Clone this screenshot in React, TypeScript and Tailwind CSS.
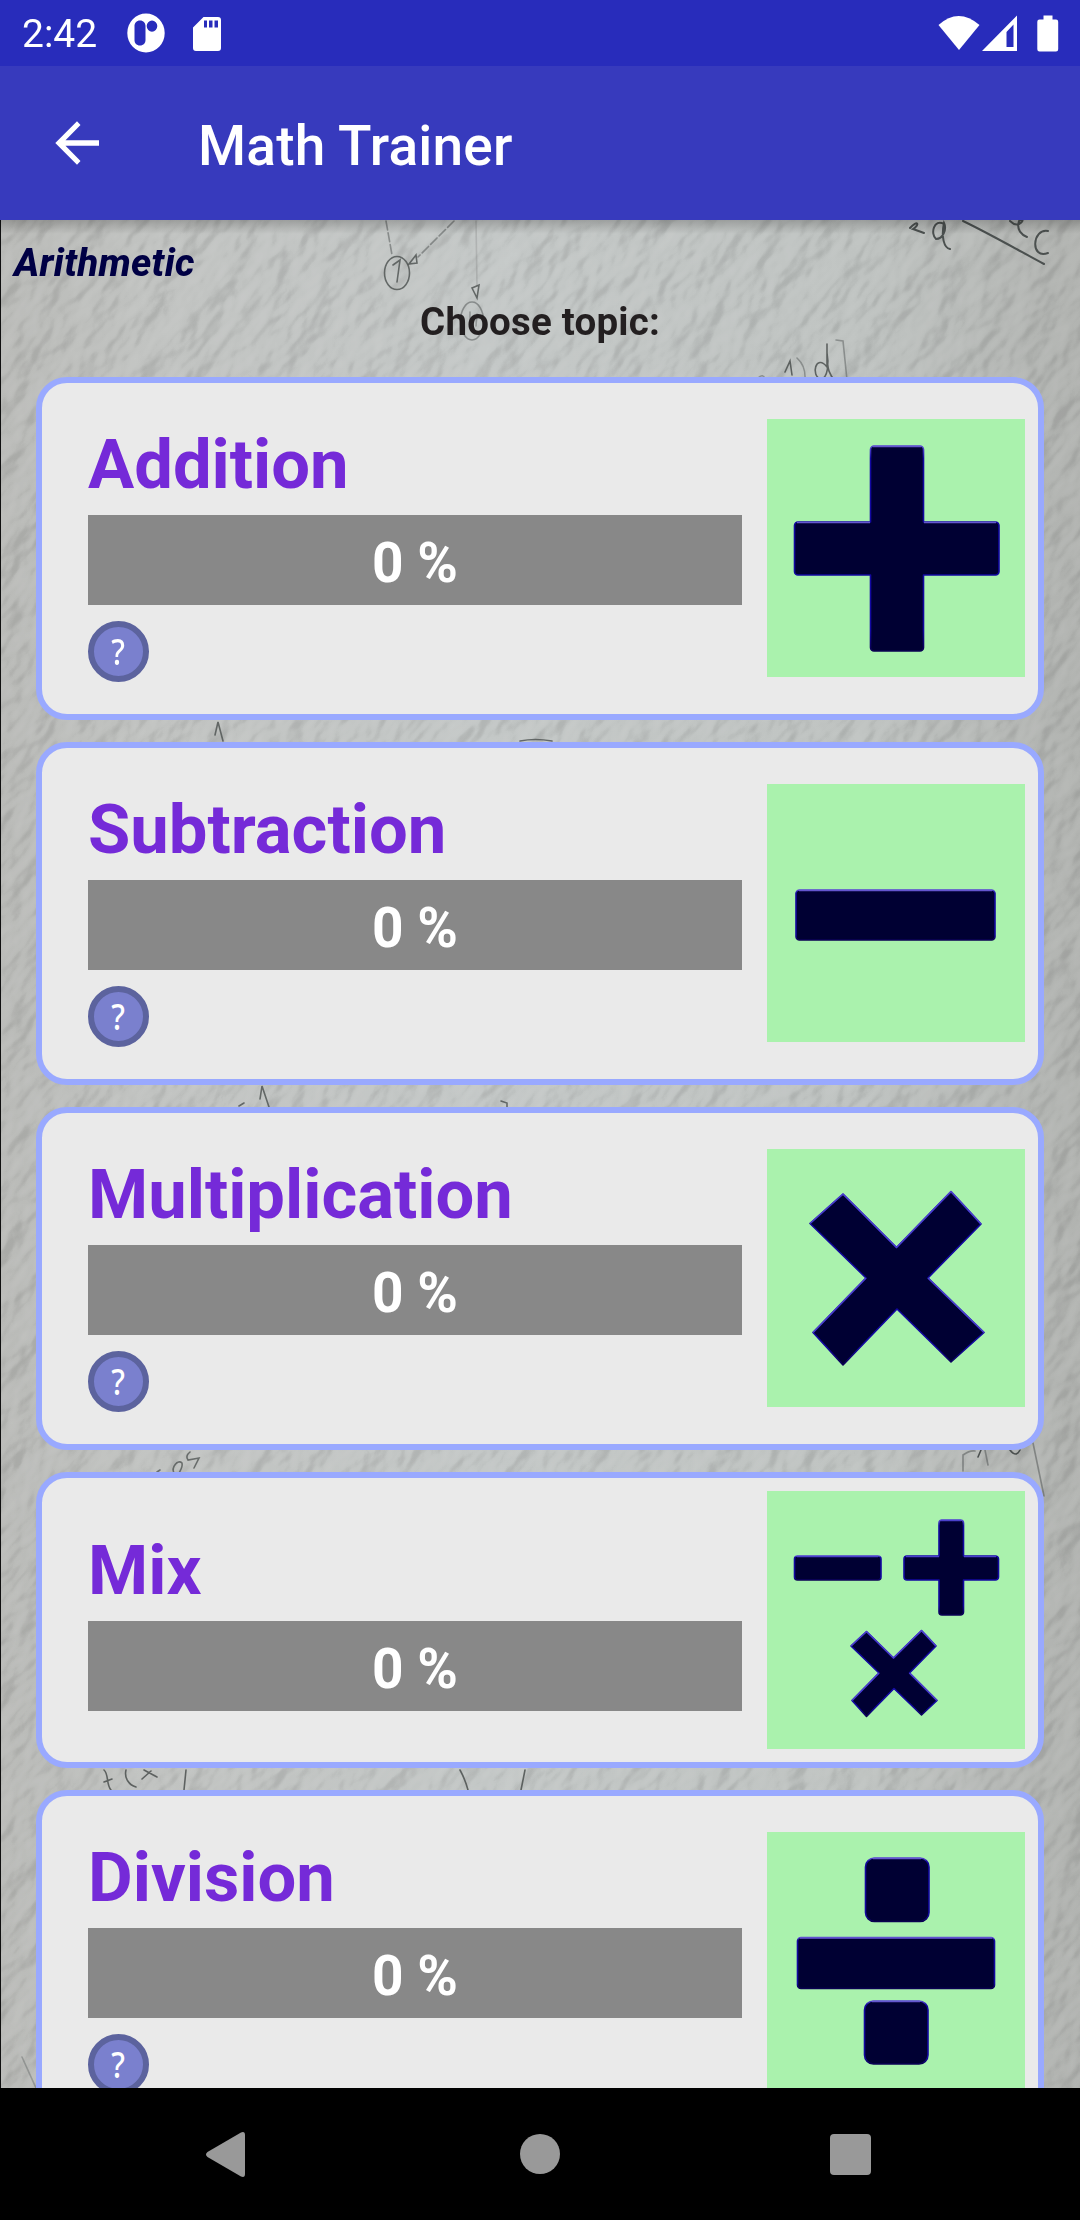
import React from "react";

const INK = "#000033";

function Edge({ id }: { id: string }) {
  return (
    <linearGradient id={id} x1="0" y1="0" x2="0" y2="1">
      <stop offset="0" stopColor="#5a4fd0" />
      <stop offset="0.06" stopColor="#1208a0" />
      <stop offset="0.9" stopColor="#1208a0" />
      <stop offset="1" stopColor="#0a0050" />
    </linearGradient>
  );
}

function SymbolTile({ name, children }: { name: string; children: React.ReactNode }) {
  return (
    <svg viewBox="0 0 258 258" className="h-[258px] w-[258px] shrink-0 bg-[#aaf2ad]">
      <defs>
        <Edge id={"edge-" + name} />
      </defs>
      <g fill={INK} stroke={"url(#edge-" + name + ")"} strokeWidth="1.6" strokeLinejoin="round">
        {children}
      </g>
    </svg>
  );
}

function Plus() {
  return (
    <SymbolTile name="plus">
      <path d="M107 27h46a3.500 3.500 0 0 1 3.500 3.500V103h72a3.500 3.500 0 0 1 3.500 3.500v46a3.500 3.500 0 0 1-3.500 3.500h-72v72.500a3.500 3.500 0 0 1-3.500 3.500h-46a3.500 3.500 0 0 1-3.500-3.500V156H31a3.500 3.500 0 0 1-3.500-3.500v-46a3.500 3.500 0 0 1 3.500-3.500h72.500V30.500A3.500 3.500 0 0 1 107 27z" />
      <path d="M106 27.500h48M30 103.500h73M157 103.500h72" stroke="#6456cf" fill="none" />
    </SymbolTile>
  );
}

function Minus() {
  return (
    <SymbolTile name="minus">
      <rect x="29" y="106" width="199" height="50" rx="3.500" />
      <path d="M32 106.500h193" stroke="#6456cf" />
    </SymbolTile>
  );
}

function Times() {
  return (
    <SymbolTile name="times">
      <path d="M76 45L129.500 98.500 184 42.500 214 75 161 129 217 183.500 184 213 130 160 76 216 46 183.500 99 129 43 74.500z" />
      <path d="M43 74.500L76 45 129.500 98.500 184 42.500 214 75M46 183.500L99 129M161 129L217 183.500" stroke="#4a40cc" fill="none" />
    </SymbolTile>
  );
}

function Mix() {
  return (
    <SymbolTile name="mix">
      <rect x="27.500" y="65" width="86.500" height="24" rx="3" />
      <path d="M175 29h18.500a3 3 0 0 1 3 3v33H228.500a3 3 0 0 1 3 3v18a3 3 0 0 1-3 3h-32v32a3 3 0 0 1-3 3H175a3 3 0 0 1-3-3V89h-32a3 3 0 0 1-3-3V68a3 3 0 0 1 3-3h32V32a3 3 0 0 1 3-3z" />
      <path d="M99.500 140.500L126.500 167 154.500 139.500 169 155 142.500 182 170 209.500 154.500 224 127 197.500 99.500 225.500 85 209.500 112 182 84 155z" />
      <path d="M30 65.500h81M174 29.500h20M139 65.500h33M197 65.500h32M84 155L99.500 140.500 126.500 167 154.500 139.500 169 155M85 209.500L112 182M142.500 182L170 209.500" stroke="#4a40cc" fill="none" />
    </SymbolTile>
  );
}

function Divide() {
  return (
    <SymbolTile name="divide">
      <rect x="98.500" y="26" width="63.500" height="63.500" rx="9" />
      <rect x="30.500" y="105.500" width="197" height="51" rx="3.500" />
      <rect x="97.500" y="169" width="63.500" height="63" rx="9" />
      <path d="M106 26.500h48M33 106h192M105 169.500h48" stroke="#6456cf" fill="none" />
    </SymbolTile>
  );
}

const topics = [
  { title: "Addition", percent: 0, help: true, Icon: Plus },
  { title: "Subtraction", percent: 0, help: true, Icon: Minus },
  { title: "Multiplication", percent: 0, help: true, Icon: Times },
  { title: "Mix", percent: 0, help: false, Icon: Mix },
  { title: "Division", percent: 0, help: true, Icon: Divide },
];

function TopicCard({ title, percent, help, Icon }: (typeof topics)[number]) {
  return (
    <section
      className={
        "flex shrink-0 items-start justify-between rounded-[31px] border-[6px] border-[#99a9ff] bg-[#eaeaea] pr-[13px] pl-[46px] " +
        (help ? "h-[343px] pt-[36px]" : "h-[296px] pt-[13px]")
      }
    >
      <div className={"flex w-[654px] flex-col " + (help ? "pt-[6px]" : "pt-[40px]")}>
        <h2 className="text-[68.75px] leading-[80px] font-bold text-[#752ad8]">{title}</h2>
        <div className="mt-[10px] flex h-[90px] shrink-0 items-center justify-center bg-[#888888]">
          <span className="pt-[5px] text-[55px] leading-[64px] font-bold text-white">{percent} %</span>
        </div>
        {help && (
          <button className="mt-[16px] flex h-[61px] w-[61px] shrink-0 items-center justify-center rounded-full border-[6px] border-[#5c639e] bg-[#7a80ce]">
            <span className="scale-x-85 font-['Noto_Sans',sans-serif] text-[36px] leading-[48px] font-medium text-white">?</span>
          </button>
        )}
      </div>
      <Icon />
    </section>
  );
}

/* Plaster wall with pencilled formulas behind the list. */
function Wall() {
  return (
    <svg viewBox="0 220 1080 1868" className="absolute inset-0 h-full w-full">
      <defs>
        <linearGradient id="shade" x1="0" y1="0" x2="1" y2="0">
          <stop offset="0" stopColor="#b9bab7" />
          <stop offset="0.14" stopColor="#c0c2c0" />
          <stop offset="0.45" stopColor="#c3c7c6" />
          <stop offset="0.8" stopColor="#bec2c0" />
          <stop offset="1" stopColor="#b0b2af" />
        </linearGradient>
        <filter id="plaster" x="0" y="0" width="1" height="1" colorInterpolationFilters="sRGB">
          <feTurbulence type="fractalNoise" baseFrequency="0.022 0.036" numOctaves="3" seed="8" result="noise" />
          <feColorMatrix in="noise" type="matrix" values="0 0 0 0 0  0 0 0 0 0  0 0 0 0 0  1 0 0 0 0" />
          <feDiffuseLighting surfaceScale="8" diffuseConstant="1" lightingColor="#ffffff">
            <feDistantLight azimuth="250" elevation="31" />
          </feDiffuseLighting>
        </filter>
      </defs>
      <rect x="0" y="220" width="1080" height="1868" fill="url(#shade)" />
      <g opacity="0.085" style={{ mixBlendMode: "hard-light" }}>
        <rect x="-900" y="-100" width="2900" height="2500" filter="url(#plaster)" transform="rotate(-50 540 1150)" />
      </g>
      <g fill="none" stroke="#4b504f" strokeWidth="1.6" strokeLinecap="round">
        <path d="M386 221L392 255M454 221L418 257" opacity="0.5" strokeDasharray="9 3" />
        <path d="M476 221L477 286" opacity="0.18" />
        <ellipse cx="397" cy="273" rx="12.500" ry="16.500" opacity="0.8" />
        <path d="M393 265L400 260 397 282M409 264L416 255 417 263zM472 288L479 285 477 298z" opacity="0.8" />
        <ellipse cx="472" cy="321" rx="11.500" ry="19" opacity="0.5" />
        <path d="M470 312v15M477 314l-1 12" opacity="0.4" />
        <path d="M963 221C988 233 1018 250 1044 264M910 228C918 219 920 225 913 229L924 233M944 224C934 218 930 234 936 239 943 239 947 229 944 223 941 237 944 248 950 249M1010 221C1020 231 1027 215 1019 221 1016 230 1022 235 1027 237M1048 231C1032 228 1030 260 1048 253" strokeWidth="2" />
        <path d="M785 372L790 361 792 375M827 344V367C816 353 810 376 821 379 828 378 829 363 827 353 827 370 830 376 835 380" opacity="0.85" />
        <path d="M758 378Q763 373 765 379M774 379h3M797 358Q806 366 805 380M836 340L843 341 847 380" opacity="0.45" />
        <path d="M215 735L218 722 223 741M520 741Q535 738 552 741" opacity="0.8" />
        <path d="M260 1099L262 1086 269 1107M239 1106L244 1103M501 1101L507 1103V1107" opacity="0.8" />
        <path d="M157 1472L160 1470M174 1473C171 1467 178 1459 182 1463 183 1467 180 1471 179 1473M190 1452Q185 1456 188 1460L199 1458 194 1468" opacity="0.75" />
        <path d="M963 1455Q970 1450 975 1451M985 1450L988 1465M963 1455V1471M1033 1443L1044 1496" opacity="0.5" />
        <path d="M981 1450L978 1457M1010 1450Q1016 1458 1020 1450" />
        <path d="M104 1770C109 1774 106 1785 111 1790M104 1782L112 1779M126 1770C124 1778 129 1785 136 1787M144 1770L157 1777M151 1771L142 1779M186 1770L184 1790M460 1770Q465 1779 468 1790M525 1770L521 1790" opacity="0.85" />
        <path d="M22 2057L36 2088" opacity="0.35" />
      </g>
      <rect x="0" y="220" width="1" height="1868" fill="#101010" />
    </svg>
  );
}

export default function App() {
  return (
    <div className="flex h-[2220px] w-[1080px] flex-col overflow-hidden bg-black font-[Roboto,sans-serif]">
      <header className="flex h-[66px] shrink-0 items-center bg-[#282cbb] text-white">
        <span className="ml-[22px] w-[80px] pt-px text-[39px] leading-[46px] whitespace-nowrap">2:42</span>
        <svg viewBox="0 0 38 40" className="ml-[25px] h-[40px] w-[38px]">
          <path
            fillRule="evenodd"
            fill="#fff"
            d="M19 .5a18.700 19.500 0 1 1 0 39 18.700 19.500 0 1 1 0-39zM13 7.500c-3.500 0-5.500 2.500-5.500 5.500v14c0 3 2 5.500 5.500 5.500s5.500-2.500 5.500-5.500V13c0-3-2-5.500-5.500-5.500zM25 7.500a5.300 5.600 0 1 0 0 11.200 5.300 5.600 0 1 0 0-11.200z"
          />
        </svg>
        <svg viewBox="0 0 28 36" className="mt-px ml-[28px] h-[36px] w-[28px]">
          <path
            fillRule="evenodd"
            fill="#fff"
            d="M10.500 1H25a3 3 0 0 1 3 3v28a3 3 0 0 1-3 3H3a3 3 0 0 1-3-3V11.500zM11 4.500v7h3v-7zM16 4.500v7h3.500v-7zM21.500 4.500v7H25v-7z"
          />
        </svg>
        <svg viewBox="0 0 122 40" className="mr-[20px] ml-auto h-[40px] w-[122px]" fill="#fff">
          <path d="M.5 12Q20.500-6 41.500 12L21 37z" />
          <path fillRule="evenodd" d="M79 2.500V38H44zM75.500 11.500L68.500 19v15h7z" />
          <path d="M105.500 2.500h9v4h3.500a2.200 2.200 0 0 1 2.200 2.200v27.500a2.200 2.200 0 0 1-2.200 2.200h-16.500a2.200 2.200 0 0 1-2.200-2.200V8.700a2.200 2.200 0 0 1 2.200-2.200h4z" />
        </svg>
      </header>
      <div className="flex h-[154px] shrink-0 items-center bg-[#373abd] text-white">
        <svg viewBox="0 0 44 44" className="ml-[55px] h-[44px] w-[44px]" fill="#fff">
          <path d="M44 19.200v5.500H10.500L25.500 40 22 43.700.3 22 22 .3 25.500 4 10.500 19.200z" />
        </svg>
        <h1 className="ml-[99px] pt-[5px] text-[55px] leading-[64px] font-medium tracking-[0.2px]">Math Trainer</h1>
      </div>
      <main className="relative h-[1868px] shrink-0 overflow-hidden">
        <Wall />
        <div className="relative flex flex-col">
          <div className="absolute top-0 h-[14px] w-full bg-linear-to-b from-black/20 to-transparent" />
          <p className="mt-[20px] ml-[14px] text-[38.5px] leading-[46px] font-extrabold tracking-[0.3px] text-[#000044] italic">
            Arithmetic
          </p>
          <p className="mt-[13px] text-center text-[38.5px] leading-[46px] font-bold tracking-[0.2px] text-[#231f20]">
            Choose topic:
          </p>
          <div className="mt-[32px] flex flex-col gap-[22px] px-[36px]">
            {topics.map((topic) => (
              <TopicCard key={topic.title} {...topic} />
            ))}
          </div>
        </div>
      </main>
      <nav className="flex h-[132px] shrink-0 items-center bg-black">
        <svg viewBox="0 0 1080 132" className="h-[132px] w-[1080px]" fill="#999999">
          <path d="M207.500 64L241 44.500Q245 43 245 47V86Q245 90 241 88.500L207.500 69Q204.500 66.500 207.500 64z" />
          <circle cx="540" cy="66" r="20" />
          <rect x="830" y="46" width="41" height="41" rx="4" />
        </svg>
      </nav>
    </div>
  );
}
